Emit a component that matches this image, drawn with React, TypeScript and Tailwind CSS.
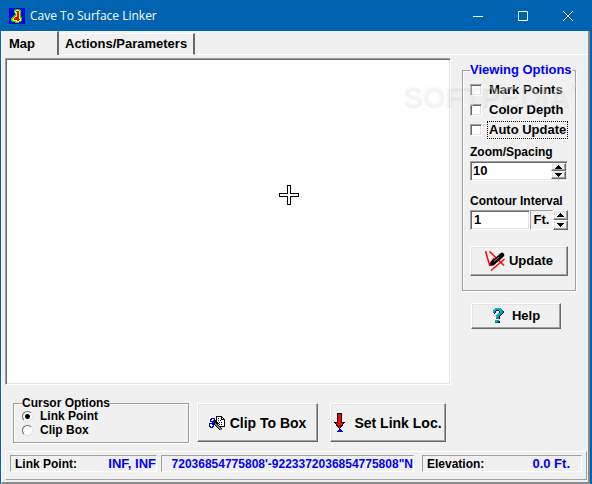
import React, { useState } from 'react';

const raised =
  'border border-t-white border-l-white border-r-[#696969] border-b-[#696969] shadow-[inset_-1px_-1px_0_#a0a0a0,inset_1px_1px_0_#e3e3e3]';
const sunken =
  'border border-t-[#a0a0a0] border-l-[#a0a0a0] border-r-white border-b-white';
const sunkenDeep =
  'border border-t-[#a0a0a0] border-l-[#a0a0a0] border-r-white border-b-white shadow-[inset_1px_1px_0_#696969,inset_-1px_-1px_0_#e3e3e3]';
const groupBox = 'min-w-0 border border-[#a0a0a0] shadow-[1px_1px_0_#fff,inset_1px_1px_0_#fff]';

const palette: Record<string, string> = {
  K: '#000000',
  W: '#ffffff',
  B: '#0000d8',
  A: '#808080',
  G: '#00e000',
  Y: '#ffff00',
  R: '#f00000',
  T: '#00b4b8',
  D: '#008090',
  N: '#000080',
};

const caveRows = [
  '................',
  '......GGGGG.....',
  '.....GGYYYGG....',
  '.....GYRRRYG....',
  '.....GYYRRYG....',
  '......GYRRYG....',
  '......GYRRYG....',
  '.....GGYRRYG....',
  '....GGYYRRYG....',
  '...GGYRRRRYGG...',
  '..GGYRRRRRYYG...',
  '..GYYRRRRRRYG...',
  '..GGYYYYRRYYG...',
  '...GGGGYYYGG....',
  '......GGGG......',
  '................',
];

const clipRows = [
  '.......KKKKKK...',
  '.......KWWWWKK..',
  '..BBBB.KWKWWKWK.',
  '.BB..B.KWWWWKKKK',
  '.B..BKKKWKWKWWWK',
  '.BBBBBKKWWWWWWWK',
  '...BBKKKKWKWKWWK',
  'BBBBBKAKKKWWWWWK',
  'B..BBKAAKWKWKWWK',
  'B...B.KAAKWWWWWK',
  'BB.BB..KAAKKKKKK',
  '.BBB....KAAK....',
  '.........KAAK...',
  '..........KAA...',
];

const questionRows = [
  '...TTTTTT...',
  '..TTTTTTTD..',
  '.TTTNNNTTTD.',
  '.TTN...NTTDN',
  '.TDN...NTTDN',
  '..N...TTTDN.',
  '.....TTTDN..',
  '....TTTDN...',
  '....TTDN....',
  '....TTDN....',
  '....DDDN....',
  '............',
  '...TTTD.....',
  '...TTDDN....',
  '...DDDNN....',
  '............',
];

const PixelIcon = ({ rows, className }: { rows: string[]; className: string }) => (
  <svg className={className} viewBox={`0 0 ${rows[0].length} ${rows.length}`} shapeRendering="crispEdges">
    {rows.map((row, y) =>
      row.split('').map((c, x) => (c === '.' ? null : <rect key={`${x}-${y}`} x={x} y={y} width="1" height="1" fill={palette[c]} />))
    )}
  </svg>
);

const PencilIcon = () => (
  <svg className="w-5 h-5 shrink-0" viewBox="0 0 20 20">
    <path d="M.5 0l4 14L9 7M4.500 .5L19 14.500M6 19.500L19.500 8" stroke="#f00" strokeWidth="1.500" fill="none" />
    <path d="M8.500 11.500L17 4" stroke="#000" strokeWidth="4.500" strokeLinecap="round" />
    <path d="M5 15l1-5 4 4z" />
    <path d="M9 10.500l5-4.500" stroke="#909090" fill="none" />
  </svg>
);

const DownIcon = () => (
  <svg className="w-3 h-5 shrink-0" viewBox="0 0 12 20" shapeRendering="crispEdges">
    <path d="M3.500 .5h4v9h3l-5 6-5-6h3z" fill="#f00" stroke="#000" />
    <path d="M5 16h2l2 3H2z" fill="#0000e0" />
  </svg>
);

const Spinner = ({ onStep, label }: { onStep: (n: number) => void; label: string }) => (
  <div className="flex w-[15px] shrink-0 flex-col bg-[#f0f0f0]">
    <button type="button" aria-label={`${label} up`} onClick={() => onStep(1)} className={`flex flex-1 items-center justify-center ${raised}`}>
      <svg className="w-[7px] h-1" viewBox="0 0 7 4" shapeRendering="crispEdges"><path d="M0 4h7L3.500 0z" /></svg>
    </button>
    <button type="button" aria-label={`${label} down`} onClick={() => onStep(-1)} className={`flex flex-1 items-center justify-center ${raised}`}>
      <svg className="w-[7px] h-1" viewBox="0 0 7 4" shapeRendering="crispEdges"><path d="M0 0h7L3.500 4z" /></svg>
    </button>
  </div>
);

const Watermark = () => (
  <div className="pointer-events-none absolute right-[14px] top-[78px] flex text-[29px] leading-9 font-bold text-[#f8f8f8]/40 [text-shadow:1px_2px_2px_rgba(0,0,0,0.06)]">
    SOFTPEDIA<span className="text-[10px] leading-4">®</span>
  </div>
);

const checks = ['Mark Points', 'Color Depth', 'Auto Update'];
const cursors = ['Link Point', 'Clip Box'];

const App: React.FC = () => {
  const [tab, setTab] = useState('Map');
  const [checked, setChecked] = useState<Record<string, boolean>>({});
  const [cursor, setCursor] = useState('Link Point');
  const [zoom, setZoom] = useState('10');
  const [contour, setContour] = useState('1');

  return (
    <div className="relative flex min-h-screen flex-col border-r-2 border-b border-l border-[#0063b1] bg-[#f0f0f0] font-['Liberation_Sans',Arial,sans-serif] text-[13px] leading-4 font-bold text-black">
      <header className="flex h-[31px] items-center bg-[#0063b1] pl-2 text-white">
        <span className="bg-[#0000f0]">
          <PixelIcon rows={caveRows} className="w-4 h-4" />
        </span>
        <h1 className="ml-[5px] flex-1 font-['Open_Sans',sans-serif] text-[12px] font-normal">Cave To Surface Linker</h1>
        <button type="button" aria-label="Minimize" className="flex h-full w-[45px] items-center justify-center">
          <svg className="w-[10px] h-[10px]" viewBox="0 0 10 10" stroke="#fff"><path d="M0 5.500h10" /></svg>
        </button>
        <button type="button" aria-label="Maximize" className="flex h-full w-[45px] items-center justify-center">
          <svg className="w-[10px] h-[10px]" viewBox="0 0 10 10" stroke="#fff" fill="none"><path d="M.5 .5h9v9h-9z" /></svg>
        </button>
        <button type="button" aria-label="Close" className="flex h-full w-[45px] items-center justify-center">
          <svg className="w-[10px] h-[10px]" viewBox="0 0 10 10" stroke="#fff"><path d="M0 0l10 10M10 0L0 10" /></svg>
        </button>
      </header>

      <div className="flex flex-1 flex-col border-r-2 border-b-2 border-[#8a8a8a] border-l border-l-white">
        <div role="tablist" className="flex h-6 items-end">
          <button type="button" role="tab" aria-selected={tab === 'Map'} onClick={() => setTab('Map')} className="h-6 w-[57px] border-t border-r-2 border-t-white border-r-[#696969] pl-[7px] text-left">
            Map
          </button>
          <button type="button" role="tab" aria-selected={tab !== 'Map'} onClick={() => setTab('Actions/Parameters')} className="h-[22px] border-t border-r-2 border-b border-t-white border-r-[#696969] border-b-white px-[6px]">
            Actions/Parameters
          </button>
          <div className="flex-1 self-stretch border-b border-white" />
        </div>

        <main className="flex flex-1 pt-[3px]">
          <div className="flex flex-1 flex-col pl-[3px]">
            <div className={`mr-[11px] flex min-h-[327px] flex-1 items-center justify-center bg-white ${sunkenDeep}`}>
              <svg className="mb-[54px] ml-[122px] w-5 h-5" viewBox="0 0 20 20" shapeRendering="crispEdges">
                <path d="M8.500 .5h3v8h8v3h-8v8h-3v-8h-8v-3h8z" fill="#fff" stroke="#000" />
              </svg>
            </div>
            <div className="flex items-start pt-3 pb-2 pl-2">
              <fieldset className={`flex h-[46px] w-[176px] flex-col pl-2 ${groupBox}`}>
                <legend className="text-[12px] leading-3">Cursor Options</legend>
                {cursors.map((c) => (
                  <label key={c} className="flex items-center gap-[7px] text-[12px] leading-[14px]">
                    <input type="radio" name="cursor" checked={cursor === c} onChange={() => setCursor(c)} className="h-[11px] w-[11px] appearance-none rounded-full border border-t-[#696969] border-l-[#696969] border-r-[#e3e3e3] border-b-[#e3e3e3] bg-white checked:bg-[radial-gradient(#000_2px,#fff_3px)]" />
                    {c}
                  </label>
                ))}
              </fieldset>
              <button type="button" className={`mt-[6px] ml-2 flex h-[39px] w-[121px] items-center justify-center gap-[5px] text-[14px] ${raised}`}>
                <PixelIcon rows={clipRows} className="w-4 h-[14px] shrink-0" />
                Clip To Box
              </button>
              <button type="button" className={`mt-[6px] ml-3 flex h-[39px] w-[116px] items-center justify-center gap-2 text-[14px] whitespace-nowrap ${raised}`}>
                <DownIcon />
                Set Link Loc.
              </button>
            </div>
          </div>

          <aside className="mr-3 flex w-[114px] shrink-0 flex-col pt-1">
            <fieldset className={`flex h-[229px] flex-col px-[7px] ${groupBox}`}>
              <legend className="whitespace-nowrap text-[#0000ff]">Viewing Options</legend>
              <div className="flex flex-col pt-[2px]">
                {checks.map((c) => (
                  <label key={c} className="flex h-5 items-center gap-[6px] whitespace-nowrap">
                    <input type="checkbox" checked={!!checked[c]} onChange={() => setChecked({ ...checked, [c]: !checked[c] })} className={`h-3 w-3 shrink-0 appearance-none bg-white checked:bg-black ${sunkenDeep}`} />
                    <span className={c === 'Auto Update' ? 'px-px outline-1 outline-dotted outline-black' : 'px-px'}>{c}</span>
                  </label>
                ))}
              </div>
              <label htmlFor="zoom" className="mt-1 mb-px text-[12px]">Zoom/Spacing</label>
              <div className={`flex h-5 bg-white p-px ${sunkenDeep}`}>
                <input id="zoom" value={zoom} onChange={(e) => setZoom(e.target.value)} className="w-0 min-w-0 flex-1 pl-px outline-none" />
                <Spinner label="Zoom" onStep={(n) => setZoom(String(Number(zoom) + n))} />
              </div>
              <label htmlFor="contour" className="mt-3 mb-px text-[12px] whitespace-nowrap">Contour Interval</label>
              <div className="flex h-5">
                <input id="contour" value={contour} onChange={(e) => setContour(e.target.value)} className={`w-0 min-w-0 flex-1 bg-white pl-[3px] outline-none ${sunkenDeep}`} />
                <span className={`flex w-[23px] items-center justify-center ${sunken}`}>Ft.</span>
                <Spinner label="Contour" onStep={(n) => setContour(String(Number(contour) + n))} />
              </div>
              <button type="button" className={`mt-4 flex h-[30px] items-center justify-center gap-1 ${raised}`}>
                <PencilIcon />
                Update
              </button>
            </fieldset>
            <button type="button" className={`mt-3 mr-[15px] ml-[9px] flex h-[26px] items-center justify-center gap-2 ${raised}`}>
              <PixelIcon rows={questionRows} className="w-3 h-4 shrink-0" />
              Help
            </button>
          </aside>
        </main>

        <footer className="mr-px ml-[3px] mb-[2px] flex h-[29px] items-start border border-t-white border-l-white border-r-[#a0a0a0] border-b-[#a0a0a0] px-1 pt-[3px] text-[12px]">
          <div className={`flex h-[17px] w-[147px] justify-between pl-1 whitespace-nowrap ${sunken}`}>
            <span>Link Point:</span>
            <span className="text-[13px] leading-4 text-[#0000ff]">INF, INF</span>
          </div>
          <div className={`ml-1 flex h-[17px] min-w-0 flex-1 justify-end overflow-hidden whitespace-nowrap text-[#0000ff] ${sunken}`}>
            72036854775808'-9223372036854775808"N
          </div>
          <div className={`ml-2 flex h-[17px] w-[160px] justify-between pr-[11px] pl-1 whitespace-nowrap ${sunken}`}>
            <span>Elevation:</span>
            <span className="text-[13px] leading-4 text-[#0000ff]">0.0 Ft.</span>
          </div>
        </footer>
      </div>
      <Watermark />
    </div>
  );
};

export default App;
